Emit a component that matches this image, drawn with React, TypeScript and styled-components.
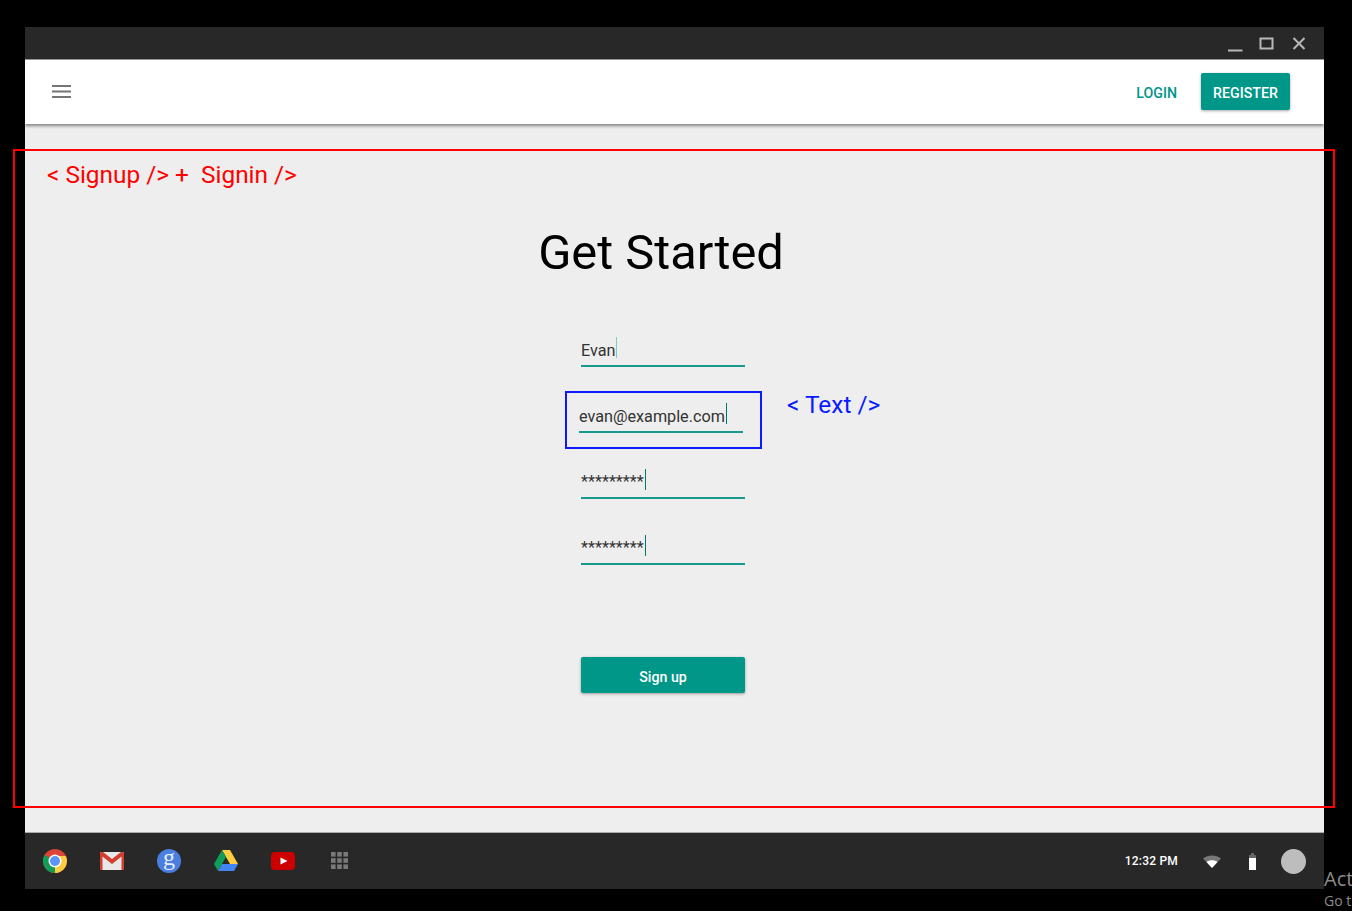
import React from "react";
import styled, { createGlobalStyle } from "styled-components";

const Global = createGlobalStyle`
  html, body { margin: 0; padding: 0; background: #000; }
  body { font-family: Roboto, "Liberation Sans", sans-serif; overflow: hidden; }
  * { box-sizing: border-box; }
`;

const Screen = styled.div`
  position: relative;
  width: 1352px;
  height: 911px;
  padding: 27px 28px 22px 25px;
  background: #000;
  overflow: hidden;
`;
const Win = styled.div`
  height: 862px;
  display: flex;
  flex-direction: column;
  background: #eee;
`;
const TitleBar = styled.div`
  height: 33px;
  flex: none;
  background: #282828;
  display: flex;
  justify-content: flex-end;
  align-items: center;
  padding: 1px 16px 0 0;
  gap: 14px;
  color: #b8b8b8;
  border-bottom: 1px solid #9a9a9a;
`;
const WinIcon = styled.svg`
  width: 18px;
  height: 18px;
  display: block;
`;
const AppBar = styled.header`
  height: 64px;
  flex: none;
  background: #fff;
  display: flex;
  align-items: center;
  justify-content: space-between;
  padding: 0 34px 0 27px;
  box-shadow: 0 2px 3px rgba(0, 0, 0, 0.45);
  position: relative;
  z-index: 1;
`;
const Burger = styled.svg`
  width: 19px;
  height: 13px;
  display: block;
  color: #757575;
  margin-bottom: 1px;
`;
const Actions = styled.div`
  display: flex;
  align-items: center;
  gap: 24px;
`;
const LinkBtn = styled.span`
  font-size: 14.2px;
  font-weight: 500;
  color: #009688;
  margin-top: 1px;
`;
const RaisedBtn = styled.button`
  border: 0;
  border-radius: 2px;
  background: #009688;
  color: #fff;
  font-family: inherit;
  font-size: 14.2px;
  font-weight: 500;
  box-shadow: 0 1px 3px rgba(0, 0, 0, 0.35);
  padding: 2px 0 0;
  display: block;
`;
const RegisterBtn = styled(RaisedBtn)`
  width: 89px;
  height: 37px;
  margin-bottom: 1px;
`;
const Main = styled.main`
  flex: 1;
  display: flex;
  flex-direction: column;
  align-items: center;
  padding: 102px 23px 0 0;
`;
const Title = styled.h1`
  margin: 0 4px 55px 0;
  font-size: 48.8px;
  line-height: 54px;
  font-weight: 400;
  color: #000;
`;
const Form = styled.div`
  width: 164px;
  display: flex;
  flex-direction: column;
`;
const Field = styled.div<{ $shift?: number }>`
  position: relative;
  height: 32px;
  margin: 0 0 34px ${(p) => p.$shift ?? 0}px;
  width: 164px;
  border-bottom: 2px solid #179a8d;
  display: flex;
  align-items: flex-start;
  padding-top: 5px;
  font-size: 16.2px;
  line-height: 21px;
  color: #333;
`;
const FieldText = styled.span<{ $raised?: boolean }>`
  white-space: pre;
  margin-top: ${(p) => (p.$raised ? "-1px" : "0")};
`;
const Caret = styled.i<{ $light?: boolean }>`
  display: block;
  width: 1px;
  height: 21px;
  margin-left: 1px;
  margin-top: -3px;
  background: ${(p) => (p.$light ? "#7fcbc3" : "#00796b")};
`;
const SubmitBtn = styled(RaisedBtn)`
  width: 164px;
  height: 36px;
  margin-top: 58px;
  padding-top: 4px;
`;
const Shelf = styled.footer`
  height: 57px;
  flex: none;
  background: #282828;
  border-top: 1px solid #aaa;
  display: flex;
  align-items: center;
  justify-content: space-between;
  padding: 0 18px;
`;
const ShelfIcons = styled.div`
  display: flex;
  align-items: center;
  gap: 33px;
`;
const ShelfIcon = styled.svg`
  width: 24px;
  height: 24px;
  display: block;
  overflow: visible;
`;
const Tray = styled.div`
  display: flex;
  align-items: center;
`;
const Clock = styled.span`
  font-size: 12px;
  font-weight: 500;
  color: #fff;
  margin-right: 24px;
  letter-spacing: 0.2px;
`;
const TrayWifi = styled.svg`
  width: 20px;
  height: 14px;
  display: block;
  margin-right: 26px;
`;
const TrayBattery = styled.svg`
  width: 9px;
  height: 17px;
  display: block;
  margin-right: 24px;
`;
const Avatar = styled.div`
  width: 25px;
  height: 25px;
  border-radius: 50%;
  background: #bdbdbd;
`;
const RedFrame = styled.div`
  position: absolute;
  left: 13px;
  top: 149px;
  width: 1322px;
  height: 659px;
  border: 2px solid #f00;
`;
const RedNote = styled.span`
  position: absolute;
  left: 47px;
  top: 161px;
  font-size: 24.4px;
  line-height: 28px;
  color: #f00;
  white-space: pre;
`;
const BlueFrame = styled.div`
  position: absolute;
  left: -14px;
  top: -10px;
  width: 197px;
  height: 58px;
  border: 2px solid #0a1bff;
`;
const BlueNote = styled.span`
  position: absolute;
  left: 208px;
  top: -10px;
  font-size: 24.4px;
  line-height: 28px;
  color: #0a1bff;
  white-space: pre;
`;
const Watermark = styled.div`
  position: absolute;
  left: 1324px;
  top: 866px;
  color: #8a8a8a;
  white-space: nowrap;
  font-family: "Open Sans", sans-serif;
`;
const WatermarkTitle = styled.div`
  font-size: 20px;
  line-height: 25px;
`;
const WatermarkSub = styled.div`
  font-size: 14px;
  line-height: 19px;
`;

const gridCells = [0, 1, 2].flatMap((r) => [0, 1, 2].map((c) => [3 + c * 6.2, 3 + r * 6.2]));

export default function App() {
  return (
    <Screen>
      <Global />
      <Win>
        <TitleBar>
          <WinIcon viewBox="0 0 18 18">
            <path d="M2 15.5h14.5" stroke="currentColor" strokeWidth="2" fill="none" />
          </WinIcon>
          <WinIcon viewBox="0 0 18 18">
            <rect x="2.5" y="3.5" width="12" height="10" stroke="currentColor" strokeWidth="2" fill="none" />
          </WinIcon>
          <WinIcon viewBox="0 0 18 18">
            <path d="M3.5 3l11 11M14.5 3l-11 11" stroke="currentColor" strokeWidth="2" fill="none" />
          </WinIcon>
        </TitleBar>
        <AppBar>
          <Burger viewBox="0 0 19 13">
            <path d="M0 1h19M0 6.5h19M0 12h19" stroke="currentColor" strokeWidth="2" fill="none" />
          </Burger>
          <Actions>
            <LinkBtn>LOGIN</LinkBtn>
            <RegisterBtn>REGISTER</RegisterBtn>
          </Actions>
        </AppBar>
        <Main>
          <Title>Get Started</Title>
          <Form>
            <Field>
              <FieldText>Evan</FieldText>
              <Caret $light />
            </Field>
            <Field $shift={-2}>
              <FieldText>evan@example.com</FieldText>
              <Caret />
              <BlueFrame />
              <BlueNote>{"< Text />"}</BlueNote>
            </Field>
            <Field>
              <FieldText $raised>*********</FieldText>
              <Caret />
            </Field>
            <Field>
              <FieldText $raised>*********</FieldText>
              <Caret />
            </Field>
            <SubmitBtn>Sign up</SubmitBtn>
          </Form>
        </Main>
        <Shelf>
          <ShelfIcons>
            <ShelfIcon viewBox="0 0 24 24">
              <circle cx="12" cy="12" r="12" fill="#db4437" />
              <path d="M12 12L1.6 18A12 12 0 0 1 1.6 6z" fill="#0f9d58" />
              <path d="M1.6 18L12 12l6 0-6.5 12A12 12 0 0 1 1.6 18z" fill="#0f9d58" />
              <path d="M12 12h11.2A12 12 0 0 1 12 24z" fill="#ffcd40" />
              <path d="M12 7h10.9A12 12 0 0 1 12 24l5-8.5z" fill="#ffcd40" />
              <circle cx="12" cy="12" r="6.5" fill="#fff" />
              <circle cx="12" cy="12" r="5" fill="#5a95f5" />
            </ShelfIcon>
            <ShelfIcon viewBox="0 0 24 24">
              <rect x="0" y="3" width="24" height="18" rx="1" fill="#e8e8e8" />
              <path d="M0 4l12 9 12-9v2L12 15 0 6z" fill="#c9c9c9" />
              <path d="M0 4a1 1 0 0 1 1-1h2l9 7 9-7h2a1 1 0 0 1 1 1v17h-2.5V7.5L12 15 2.5 7.5V21H0z" fill="#d23f31" />
            </ShelfIcon>
            <ShelfIcon viewBox="0 0 24 24">
              <circle cx="12" cy="12" r="12" fill="#4a7fe0" />
              <text x="12" y="16" textAnchor="middle" fontFamily="'Liberation Serif', serif" fontSize="24" fill="#e6eefc">g</text>
            </ShelfIcon>
            <ShelfIcon viewBox="0 0 24 24">
              <path d="M8 1h8l8 14h-8z" fill="#ffcd40" />
              <path d="M8 1l4 7L4 22 0 15z" fill="#0f9d58" />
              <path d="M4 22l4-7h16l-4 7z" fill="#4285f4" />
            </ShelfIcon>
            <ShelfIcon viewBox="0 0 24 24">
              <rect x="0" y="3" width="24" height="18" rx="4" fill="#cc0000" />
              <path d="M9.5 8.5l7 3.5-7 3.5z" fill="#fff" />
            </ShelfIcon>
            <ShelfIcon viewBox="0 0 24 24">
              <g fill="#7a7a7a">
                {gridCells.map(([x, y]) => (
                  <rect key={`${x}-${y}`} x={x} y={y} width="4.6" height="4.6" />
                ))}
              </g>
            </ShelfIcon>
          </ShelfIcons>
          <Tray>
            <Clock>12:32 PM</Clock>
            <TrayWifi viewBox="0 0 20 14">
              <path d="M10 14L1 4.5C6 0.5 14 0.5 19 4.5z" fill="#777" />
              <path d="M10 14L4.5 8C7.5 5.5 12.5 5.5 15.5 8z" fill="#fff" />
            </TrayWifi>
            <TrayBattery viewBox="0 0 9 17">
              <path d="M3 0h3v2h2v15H1V2h2z" fill="#666" />
              <rect x="1" y="5" width="7" height="12" fill="#fff" />
            </TrayBattery>
            <Avatar />
          </Tray>
        </Shelf>
      </Win>
      <RedFrame />
      <RedNote>{"< Signup /> +  Signin />"}</RedNote>
      <Watermark>
        <WatermarkTitle>Act</WatermarkTitle>
        <WatermarkSub>Go t</WatermarkSub>
      </Watermark>
    </Screen>
  );
}
